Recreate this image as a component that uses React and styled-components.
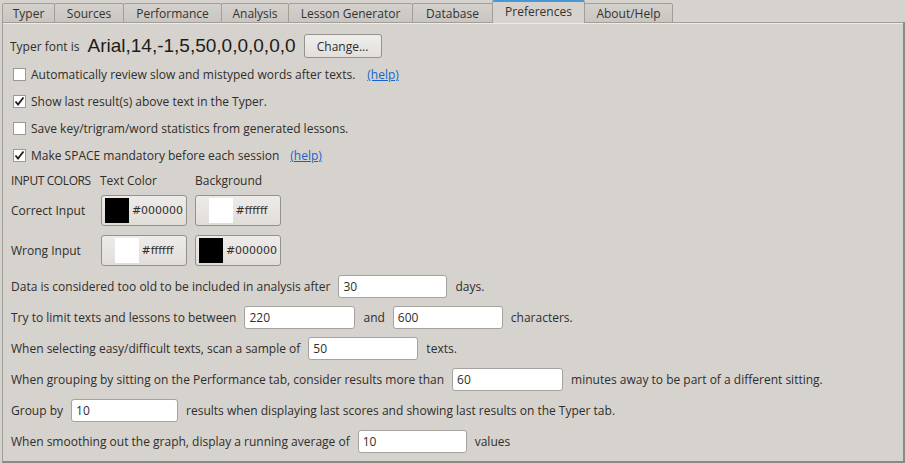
import React from "react";
import styled, { createGlobalStyle } from "styled-components";

const GlobalStyle = createGlobalStyle`
  html, body {
    margin: 0;
    padding: 0;
    background: #d6d2cd;
  }
  body {
    font-family: "Open Sans", "DejaVu Sans", sans-serif;
    font-size: 12px;
    color: #2f2e2b;
  }
`;

const tabs = [
  { label: "Typer", width: 53 },
  { label: "Sources", width: 70 },
  { label: "Performance", width: 99 },
  { label: "Analysis", width: 68 },
  { label: "Lesson Generator", width: 125 },
  { label: "Database", width: 81 },
  { label: "Preferences", width: 93, active: true },
  { label: "About/Help", width: 89 },
];

const checks = [
  { label: "Automatically review slow and mistyped words after texts.", checked: false, help: true, gap: 12 },
  { label: "Show last result(s) above text in the Typer.", checked: true },
  { label: "Save key/trigram/word statistics from generated lessons.", checked: false },
  { label: "Make SPACE mandatory before each session", checked: true, help: true, gap: 11 },
];

const App = () => {
  return (
    <Window>
      <GlobalStyle />
      <TabBar>
        {tabs.map((t) => (
          <Tab key={t.label} $width={t.width} $active={t.active}>
            {t.label}
          </Tab>
        ))}
      </TabBar>
      <Panel>
        <FontRow>
          <Label>Typer font is</Label>
          <BigFont>Arial,14,-1,5,50,0,0,0,0,0</BigFont>
          <Button $width={78}>Change...</Button>
        </FontRow>

        <Checks>
          {checks.map((c) => (
            <CheckRow key={c.label}>
              <Box>{c.checked && <CheckMark />}</Box>
              <span>{c.label}</span>
              {c.help && <Help $gap={c.gap}>(help)</Help>}
            </CheckRow>
          ))}
        </Checks>

        <ColorHeader>
          <ColorCol $width={89} $tight>INPUT COLORS</ColorCol>
          <ColorCol $width={95}>Text Color</ColorCol>
          <ColorCol>Background</ColorCol>
        </ColorHeader>
        <ColorRow $top={4}>
          <ColorLabel>Correct Input</ColorLabel>
          <SwatchButton>
            <Swatch $color="#000000" />
            #000000
          </SwatchButton>
          <SwatchButton>
            <Swatch $color="#ffffff" />
            #ffffff
          </SwatchButton>
        </ColorRow>
        <ColorRow $top={9}>
          <ColorLabel>Wrong Input</ColorLabel>
          <SwatchButton>
            <Swatch $color="#ffffff" />
            #ffffff
          </SwatchButton>
          <SwatchButton>
            <Swatch $color="#000000" />
            #000000
          </SwatchButton>
        </ColorRow>

        <Settings>
          <FormRow>
            <span>Data is considered too old to be included in analysis after</span>
            <Field $width={109} defaultValue="30" />
            <span>days.</span>
          </FormRow>
          <FormRow>
            <span>Try to limit texts and lessons to between</span>
            <Field $width={111} defaultValue="220" />
            <span>and</span>
            <Field $width={110} defaultValue="600" />
            <span>characters.</span>
          </FormRow>
          <FormRow>
            <span>When selecting easy/difficult texts, scan a sample of</span>
            <Field $width={110} defaultValue="50" />
            <span>texts.</span>
          </FormRow>
          <FormRow>
            <span>When grouping by sitting on the Performance tab, consider results more than</span>
            <Field $width={111} defaultValue="60" />
            <span>minutes away to be part of a different sitting.</span>
          </FormRow>
          <FormRow>
            <span>Group by</span>
            <Field $width={107} defaultValue="10" />
            <span>results when displaying last scores and showing last results on the Typer tab.</span>
          </FormRow>
          <FormRow>
            <span>When smoothing out the graph, display a running average of</span>
            <Field $width={109} defaultValue="10" />
            <span>values</span>
          </FormRow>
        </Settings>
      </Panel>
    </Window>
  );
};

export default App;

const CheckMark = () => (
  <svg width="11" height="11" viewBox="0 0 11 11">
    <path d="M1.5 5.5 L4 8.5 L9.5 1.5" fill="none" stroke="#1e1d1b" strokeWidth="1.8" />
  </svg>
);

const Window = styled.div`
  width: 906px;
  height: 464px;
  box-sizing: border-box;
  padding: 0 1px 1px 2px;
  display: flex;
  flex-direction: column;
`;

const TabBar = styled.div`
  display: flex;
  align-items: flex-end;
  height: 23px;
  flex-shrink: 0;
`;

const Tab = styled.div`
  width: ${({ $width }) => $width}px;
  box-sizing: border-box;
  height: ${({ $active }) => ($active ? 23 : 20)}px;
  display: flex;
  align-items: center;
  justify-content: center;
  padding-bottom: ${({ $active }) => ($active ? 2 : 0)}px;
  border: 1px solid #a19e99;
  border-bottom: ${({ $active }) => ($active ? "none" : "1px solid #a19e99")};
  margin-left: -1px;
  border-radius: 2px 2px 0 0;
  color: #34332f;
  background: ${({ $active }) =>
    $active ? "#d6d2cd" : "linear-gradient(#d4d0cb, #c9c5c0)"};
  border-top: ${({ $active }) => ($active ? "2px solid #4a97d8" : "1px solid #a19e99")};
  position: relative;
  z-index: ${({ $active }) => ($active ? 1 : 0)};
  &:first-child {
    margin-left: 0;
  }
`;

const Panel = styled.div`
  flex: 1;
  box-sizing: border-box;
  margin-top: -1px;
  border: 1px solid #a19e99;
  border-right: 2px solid #8c8984;
  border-bottom: 2px solid #8c8984;
  box-shadow: inset 0 1px 0 #ecebe8;
  padding: 11px 0 0 7px;
  display: flex;
  flex-direction: column;
`;

const FontRow = styled.div`
  display: flex;
  align-items: center;
  height: 24px;
`;

const Label = styled.span`
  white-space: nowrap;
`;

const BigFont = styled.span`
  font-family: "Liberation Sans", Arial, sans-serif;
  font-size: 19px;
  color: #1d1c1a;
  margin: 0 8px 0 8px;
  white-space: nowrap;
`;

const Button = styled.div`
  width: ${({ $width }) => $width}px;
  height: 24px;
  box-sizing: border-box;
  border: 1px solid #95928d;
  border-radius: 3px;
  background: linear-gradient(#f0eeec, #e2dfdb);
  display: flex;
  align-items: center;
  justify-content: center;
  color: #2f2e2b;
`;

const Checks = styled.div`
  display: flex;
  flex-direction: column;
  margin-top: 3px;
`;

const CheckRow = styled.div`
  display: flex;
  align-items: center;
  height: 27px;
  padding-left: 3px;
  white-space: nowrap;
`;

const Box = styled.div`
  width: 13px;
  height: 13px;
  box-sizing: border-box;
  background: #ffffff;
  border: 1px solid #9c9994;
  margin-right: 5px;
  display: flex;
  align-items: center;
  justify-content: center;
`;

const Help = styled.span`
  margin-left: ${({ $gap }) => $gap}px;
  color: #1565c9;
  text-decoration: underline;
`;

const ColorHeader = styled.div`
  display: flex;
  align-items: center;
  height: 22px;
  padding-left: 1px;
  white-space: nowrap;
`;

const ColorCol = styled.span`
  width: ${({ $width }) => ($width ? `${$width}px` : "auto")};
  letter-spacing: ${({ $tight }) => ($tight ? "-0.4px" : "normal")};
`;

const ColorRow = styled.div`
  display: flex;
  align-items: center;
  gap: 8px;
  margin-top: ${({ $top }) => $top}px;
  padding-left: 1px;
`;

const ColorLabel = styled.span`
  width: 82px;
  white-space: nowrap;
`;

const SwatchButton = styled.div`
  width: 86px;
  height: 31px;
  box-sizing: border-box;
  border: 1px solid #95928d;
  border-radius: 3px;
  background: linear-gradient(#eeecea, #e0ddd9);
  display: flex;
  align-items: center;
  justify-content: center;
  gap: 3px;
  font-family: "DejaVu Sans", sans-serif;
  font-size: 11px;
  color: #2f2e2b;
`;

const Swatch = styled.div`
  width: 24px;
  height: 25px;
  background: ${({ $color }) => $color};
`;

const Settings = styled.div`
  display: flex;
  flex-direction: column;
  margin-top: 5px;
  padding-left: 1px;
`;

const FormRow = styled.div`
  display: flex;
  align-items: center;
  gap: 8px;
  height: 31px;
  white-space: nowrap;
`;

const Field = styled.input`
  width: ${({ $width }) => $width}px;
  height: 23px;
  box-sizing: border-box;
  border: 1px solid #a6a39e;
  border-radius: 3px;
  background: #ffffff;
  padding: 0 4px;
  font-family: "Open Sans", sans-serif;
  font-size: 12px;
  color: #2f2e2b;
  outline: none;
`;
